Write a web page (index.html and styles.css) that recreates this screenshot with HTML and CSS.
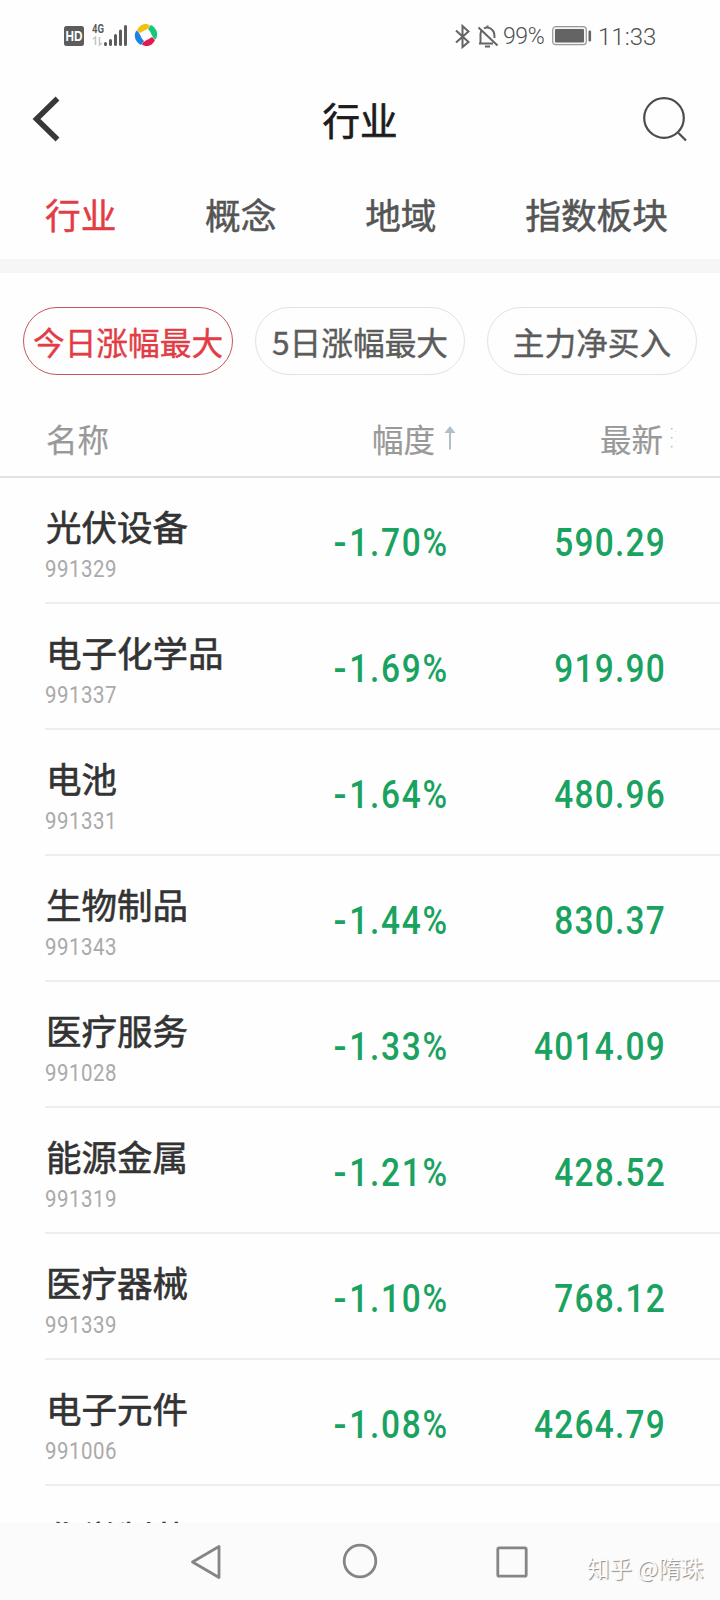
FILE: index.html
```html
<!DOCTYPE html>
<html lang="zh-CN">
<head>
<meta charset="utf-8">
<title>行业</title>
<link rel="stylesheet" href="styles.css">
</head>
<body>
<div class="screen">
  <div class="status">
    <svg class="status-left" width="100" height="30" viewBox="0 0 100 30">
      <rect x="1" y="6" width="20" height="20" rx="2.5" fill="#5c5c5c"/>
      <text x="11" y="20.5" class="hd" text-anchor="middle" textLength="17" lengthAdjust="spacingAndGlyphs">HD</text>
      <text x="29" y="13" class="net" textLength="12" lengthAdjust="spacingAndGlyphs">4G</text>
      <path d="M30 19l2.500-2v8M36.500 17v8l2.500-2" fill="none" stroke="#c4c4c4" stroke-width="1.500"/>
      <path d="M42.500 23.500v1M47.500 20.500v4M52.500 15.500v9M57.500 11v13.500M62.500 6.500v18" stroke="#5c5c5c" stroke-width="3" stroke-linecap="round"/>
      <g transform="translate(83 15)">
        <path d="M-9-5C-5-12 1-12 4-9.500C3-6-1-5-6-2Z" fill="#f2c10f"/>
        <path d="M5-10C11-7 13 0 9.500 4.500C6 3 6-2 2-6Z" fill="#16c878"/>
        <path d="M9 5C6 12-1 12-4 9.500C-3 6 2 5 6 2Z" fill="#e5174f"/>
        <path d="M-5 10C-11 7-13 0-9.500-4.500C-6-3-6 2-2 6Z" fill="#1e83e0"/>
      </g>
    </svg>
    <div class="status-right">
      <svg width="46" height="28" viewBox="0 0 46 28" fill="none" stroke="#646464" stroke-width="2">
        <path d="M2 8.500L14.500 20L8.500 25V4L14.500 9.500L2 20.500"/>
        <path d="M26.500 20.500V12C26.500 10 27 9 28 8M30 6.500C32 5 34 5 36.500 6.500C39.500 8.500 40.500 10 40.500 16M25 21.500H39M33.500 3.500V6M31 24.500H36M24.500 5.500L43.500 23.500"/>
      </svg>
      <span class="pct">99%</span>
      <svg class="battery" width="40" height="20" viewBox="0 0 40 20">
        <rect x=".7" y=".7" width="33.600" height="18" rx="3" fill="#f4f4f4" stroke="#999" stroke-width="1.200"/>
        <rect x="3" y="3" width="29" height="13.500" rx="1" fill="#646464"/>
        <rect x="36.500" y="4.500" width="2.600" height="11" rx="1.200" fill="#646464"/>
      </svg>
      <span class="time">11:33</span>
    </div>
  </div>

  <header class="header">
    <svg width="36" height="48" viewBox="0 0 36 48"><path d="M29.500 3.500L8.500 24L29.500 44.500" fill="none" stroke="#383838" stroke-width="5.500"/></svg>
    <h1>行业</h1>
    <svg width="48" height="48" viewBox="0 0 48 48" fill="none" stroke="#4c4c4c" stroke-width="2.200"><circle cx="22" cy="23" r="19.800"/><path d="M36.500 38L44 45.500"/></svg>
  </header>

  <nav class="tabs"><span class="tab on">行业</span><span class="tab">概念</span><span class="tab">地域</span><span class="tab">指数板块</span></nav>
  <div class="band"></div>

  <div class="pills"><span class="pill on">今日涨幅最大</span><span class="pill">5日涨幅最大</span><span class="pill">主力净买入</span></div>

  <div class="thead">
    <span class="c1">名称</span>
    <span class="c2">幅度<svg width="12" height="26" viewBox="0 0 12 26"><path d="M6 6V24.500" stroke="#b2bfc9" stroke-width="2"/><path d="M6 1L11.500 8H.5Z" fill="#b2bfc9"/></svg></span>
    <span class="c3">最新<svg width="8" height="24" viewBox="0 0 8 24" fill="#bbb"><path d="M1 2h1.500v1.500h-1.500zM1 11h1.500v1.500h-1.500zM1 20h1.500v1.500h-1.500z"/><path fill="#ddd" d="M5 5h1v1h-1zM5 15h1v1h-1z"/></svg></span>
  </div>

  <main class="list">
    <div class="row"><div class="name">光伏设备<small>991329</small></div><span class="chg"><i>-</i>1.70%</span><span class="last">590.29</span></div>
    <div class="row"><div class="name">电子化学品<small>991337</small></div><span class="chg"><i>-</i>1.69%</span><span class="last">919.90</span></div>
    <div class="row"><div class="name">电池<small>991331</small></div><span class="chg"><i>-</i>1.64%</span><span class="last">480.96</span></div>
    <div class="row"><div class="name">生物制品<small>991343</small></div><span class="chg"><i>-</i>1.44%</span><span class="last">830.37</span></div>
    <div class="row"><div class="name">医疗服务<small>991028</small></div><span class="chg"><i>-</i>1.33%</span><span class="last">4014.09</span></div>
    <div class="row"><div class="name">能源金属<small>991319</small></div><span class="chg"><i>-</i>1.21%</span><span class="last">428.52</span></div>
    <div class="row"><div class="name">医疗器械<small>991339</small></div><span class="chg"><i>-</i>1.10%</span><span class="last">768.12</span></div>
    <div class="row"><div class="name">电子元件<small>991006</small></div><span class="chg"><i>-</i>1.08%</span><span class="last">4264.79</span></div>
    <div class="row partial"><div class="name">化学制药</div></div>
  </main>

  <footer class="navbar">
    <svg width="32" height="38" viewBox="0 0 32 38"><path d="M29 3.500V34.500L2.500 19Z" fill="none" stroke="#858585" stroke-width="2.800" stroke-linejoin="round"/></svg>
    <svg width="36" height="36" viewBox="0 0 36 36"><circle cx="18" cy="18" r="15.800" fill="none" stroke="#858585" stroke-width="2.800"/></svg>
    <svg width="32" height="32" viewBox="0 0 32 32"><rect x="1.800" y="1.800" width="28.400" height="28.400" rx="1.500" fill="none" stroke="#858585" stroke-width="2.800"/></svg>
    <span class="mark">知乎 @隋珠</span>
  </footer>
</div>
</body>
</html>
```
FILE: styles.css
```css
* { box-sizing: border-box; }
body { margin: 0; background: #fefefe; font-family: "Noto Sans CJK SC", sans-serif; }
.screen { width: 720px; height: 1600px; overflow: hidden; display: flex; flex-direction: column; background: #fefefe; }
.screen > * { flex: none; }
svg { display: block; flex: none; }

.status { height: 70px; padding: 20px 65px 0 63px; display: flex; justify-content: space-between; align-items: flex-start; }
.hd { font: bold 14px "Liberation Sans", sans-serif; fill: #fff; }
.net { font: bold 12px Roboto, sans-serif; fill: #5c5c5c; }
.status-right { display: flex; align-items: center; height: 32px; font: 300 24px/32px Roboto, sans-serif; color: #505050; }
.pct { width: 44px; margin-left: 3px; padding-top: 1px; font-size: 23px; letter-spacing: -.4px; }
.battery { margin-left: 5px; }
.time { width: 57px; margin-left: 6px; padding-top: 1px; font-size: 24px; }

.header { height: 100px; padding: 25px 30px 0 28px; display: grid; grid-template-columns: 49px 1fr 48px; align-items: start; }
.header h1 { margin: -2px 0 0; padding-left: 1px; font-size: 37.500px; line-height: 52px; font-weight: 400; -webkit-text-stroke: .7px; color: #1c1c1c; text-align: center; }

.tabs { height: 89px; padding: 17px 52px 0 45px; display: flex; justify-content: space-between; font-size: 35.700px; line-height: 54px; -webkit-text-stroke: .5px; color: #555; }
.tab.on { color: #e23d45; }
.band { height: 14px; background: #f6f6f6; }

.pills { height: 102px; padding: 34px 23px 0; display: grid; grid-template-columns: repeat(3, 210px); justify-content: space-between; }
.pill { height: 68px; border: 1px solid #e2e2e2; border-radius: 34px; font-size: 31.700px; line-height: 66px; -webkit-text-stroke: .4px; text-align: center; white-space: nowrap; color: #5c5c5c; }
.pill.on { border-color: #c5545c; color: #e23d45; }

.thead { height: 103px; border-bottom: 2px solid #e2e2e2; padding-top: 43px; display: grid; grid-template-columns: 46px 326px 228px 120px; align-items: start; font-size: 31.500px; line-height: 40px; -webkit-text-stroke: .2px; color: #999; }
.c1 { grid-column: 2; }
.c2, .c3 { display: flex; height: 40px; }
.c2 { gap: 9px; }
.c3 { gap: 7px; }
.c2 svg { margin-top: 7px; }
.c3 svg { margin-top: 8px; }

.list { height: 1045px; overflow: hidden; }
.row { height: 126px; margin-left: 45px; border-bottom: 2px solid #eee; display: grid; grid-template-columns: 230px 174px 217px; color: #333; }
.name { padding: 21px 0 0 1px; font-size: 35.500px; line-height: 54px; -webkit-text-stroke: .6px; white-space: nowrap; }
.partial .name { padding-top: 24px; }
.name small { display: block; margin: 1px 0 0 -1px; font: 400 23.500px/30px Roboto, sans-serif; -webkit-text-stroke: 0; letter-spacing: .6px; color: #aaa; transform: scaleX(.87); transform-origin: 0 50%; }
.chg, .last { padding-top: 2px; font: 500 38px/126px Roboto, sans-serif; letter-spacing: 1.400px; color: #1aa260; text-align: right; white-space: nowrap; transform: scaleX(.88); transform-origin: 100% 50%; }
.chg { letter-spacing: 2px; }
.chg i { display: inline-block; font-style: normal; transform: scaleX(1.15); transform-origin: 100% 50%; margin-right: 1px; }

.navbar { height: 77px; background: #fbfbfb; display: grid; grid-template-columns: 190px 152px 154px 91px 1fr; align-items: start; padding-top: 20px; }
.navbar svg:nth-child(1) { grid-column: 2; }
.navbar svg:nth-child(3) { margin-top: 3px; }
.mark { margin-top: 7px; font-size: 22.500px; line-height: 34px; white-space: nowrap; color: #fdfdfd; text-shadow: 1px 1px 1px #888; }
```
